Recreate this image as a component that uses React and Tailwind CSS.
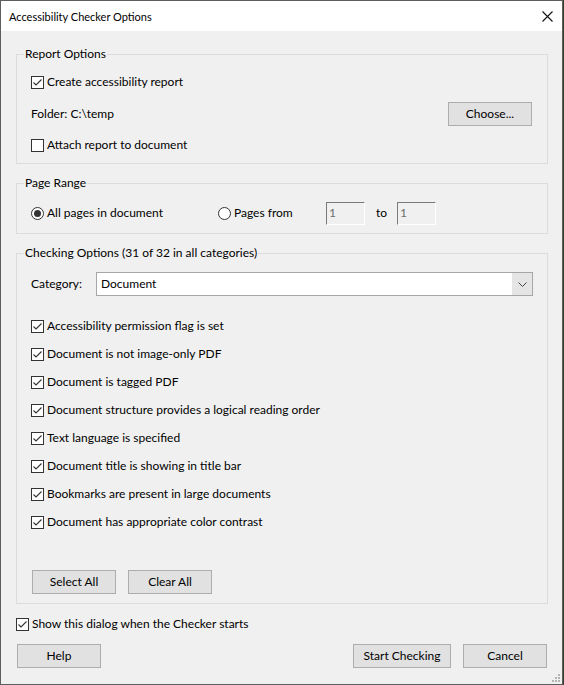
const checks = [
  'Accessibility permission flag is set',
  'Document is not image-only PDF',
  'Document is tagged PDF',
  'Document structure provides a logical reading order',
  'Text language is specified',
  'Document title is showing in title bar',
  'Bookmarks are present in large documents',
  'Document has appropriate color contrast',
];

function CheckBox({ checked }) {
  return (
    <span className="w-[13px] h-[13px] border border-[#333333] bg-white flex items-center justify-center shrink-0">
      {checked && (
        <svg width="11" height="11" viewBox="0 0 11 11">
          <path d="M1.5 5.5 L4 8 L9.5 2.5" fill="none" stroke="#333333" strokeWidth="1.1" />
        </svg>
      )}
    </span>
  );
}

function Radio({ checked }) {
  return (
    <span className="w-[13px] h-[13px] rounded-full border border-[#333333] bg-white flex items-center justify-center shrink-0">
      {checked && <span className="w-[7px] h-[7px] rounded-full bg-[#333333]" />}
    </span>
  );
}

function Check({ checked, children, className = '' }) {
  return (
    <div className={`h-[20px] flex items-center gap-[3px] ${className}`}>
      <CheckBox checked={checked} />
      <span>{children}</span>
    </div>
  );
}

function Button({ children, className = '' }) {
  return (
    <button className={`h-[24px] bg-[#e1e1e1] border border-[#adadad] flex items-center justify-center ${className}`}>
      {children}
    </button>
  );
}

function Group({ label, children, className = '' }) {
  return (
    <div className={`border border-[#dcdcdc] ml-[15px] mr-[14px] pl-[14px] pr-[15px] ${className}`}>
      <div className="-mt-[9px] -ml-[7px] w-fit px-[1px] bg-[#f0f0f0]">{label}</div>
      {children}
    </div>
  );
}

function NumField() {
  return (
    <div className="w-[39px] h-[23px] border border-t-[#7a7a7a] border-l-[#7a7a7a] border-r-white border-b-white bg-[#f0f0f0] pl-[2px] pt-[2px] text-[#6d6d6d]">
      1
    </div>
  );
}

export default function App() {
  return (
    <div className="w-[564px] h-[685px] bg-[#33402f] font-['Lato',sans-serif] text-[12px] leading-[16px] text-black">
      <div className="relative w-[563px] h-[685px] border border-[#5e5e5e] bg-[#f0f0f0] flex flex-col">
        <div className="h-[30px] bg-white flex items-center justify-between pl-[8px] pr-[9px]">
          <span className="text-[11px] pt-[1px]">Accessibility Checker Options</span>
          <svg width="11" height="11" viewBox="0 0 11 11">
            <path d="M0.5 0.5 L10.5 10.5 M10.5 0.5 L0.5 10.5" stroke="#111111" strokeWidth="1.1" />
          </svg>
        </div>

        <Group label="Report Options" className="mt-[23px] pb-[8px]">
          <Check checked className="mt-[10px]">Create accessibility report</Check>
          <div className="mt-[10px] h-[24px] flex items-center justify-between">
            <span>Folder: C:\temp</span>
            <Button className="w-[84px]">Choose...</Button>
          </div>
          <Check className="mt-[9px]">Attach report to document</Check>
        </Group>

        <Group label="Page Range" className="mt-[19px] pb-[8px]">
          <div className="mt-[10px] h-[24px] flex items-center">
            <div className="w-[187px] flex items-center gap-[3px]">
              <Radio checked />
              <span>All pages in document</span>
            </div>
            <div className="w-[108px] flex items-center gap-[3px]">
              <Radio />
              <span>Pages from</span>
            </div>
            <NumField />
            <span className="ml-[11px] w-[21px]">to</span>
            <NumField />
          </div>
        </Group>

        <Group label="Checking Options (31 of 32 in all categories)" className="mt-[19px] pb-[9px]">
          <div className="mt-[11px] h-[24px] flex items-center">
            <span className="w-[65px]">Category:</span>
            <div className="flex-1 -mr-[1px] h-[24px] border border-[#a6a6a6] bg-white flex items-center">
              <span className="flex-1 pl-[4px]">Document</span>
              <div className="w-[20px] h-full bg-[#e5e5e5] flex items-center justify-center">
                <svg width="9" height="5" viewBox="0 0 9 5">
                  <path d="M0.5 0.5 L4.5 4.5 L8.5 0.5" fill="none" stroke="#444444" strokeWidth="1" />
                </svg>
              </div>
            </div>
          </div>
          <div className="mt-[20px] flex flex-col gap-[8px]">
            {checks.map(c => <Check key={c} checked>{c}</Check>)}
          </div>
          <div className="mt-[38px] ml-[1px] flex gap-[12px]">
            <Button className="w-[84px]">Select All</Button>
            <Button className="w-[84px]">Clear All</Button>
          </div>
        </Group>

        <Check checked className="mt-[10px] ml-[15px]">Show this dialog when the Checker starts</Check>

        <div className="mt-[10px] flex items-center pl-[16px] pr-[15px]">
          <Button className="w-[84px]">Help</Button>
          <div className="flex-1" />
          <Button className="w-[98px]">Start Checking</Button>
          <Button className="w-[84px] ml-[12px]">Cancel</Button>
        </div>

        <svg className="absolute right-[2px] bottom-[2px]" width="8" height="8" viewBox="0 0 8 8">
          <rect x="6" y="0" width="2" height="2" fill="#b4b4b4" />
          <rect x="3" y="3" width="2" height="2" fill="#b4b4b4" />
          <rect x="6" y="3" width="2" height="2" fill="#b4b4b4" />
          <rect x="0" y="6" width="2" height="2" fill="#b4b4b4" />
          <rect x="3" y="6" width="2" height="2" fill="#b4b4b4" />
          <rect x="6" y="6" width="2" height="2" fill="#b4b4b4" />
        </svg>
      </div>
    </div>
  );
}
